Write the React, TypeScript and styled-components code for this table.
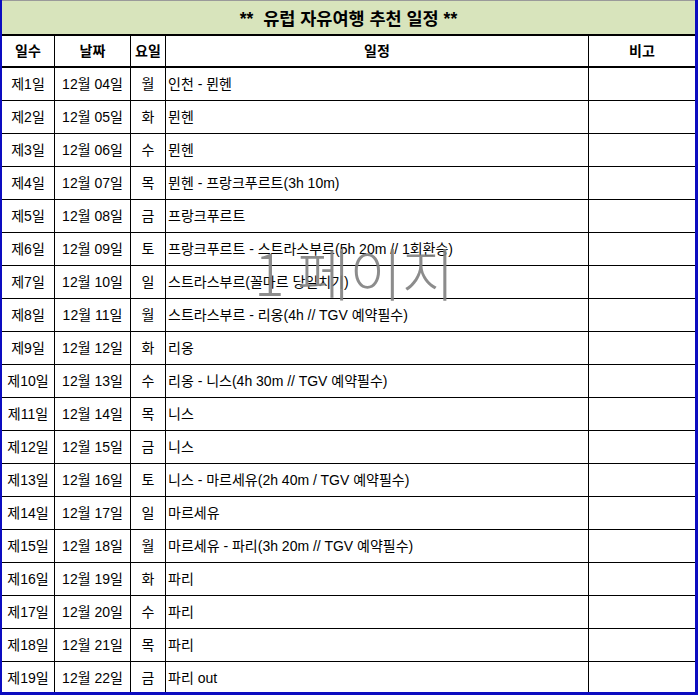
import styled, { createGlobalStyle } from "styled-components";

const GlobalStyle = createGlobalStyle`
  html, body {
    margin: 0;
    padding: 0;
    background: #ffffff;
  }
  body {
    font-family: "Liberation Sans", "Noto Sans CJK KR", sans-serif;
    color: #000000;
  }
`;

const Sheet = styled.div`
  position: relative;
  width: 698px;
  height: 695px;
  box-sizing: border-box;
  border-left: 2px solid #0c0cc0;
  border-right: 3px solid #0c0cc0;
  border-bottom: 3px solid #0c0cc0;
  overflow: hidden;
  background: #ffffff;
`;

const Titlebar = styled.div`
  height: 33px;
  border-top: 1px solid #9a9a9a;
  border-bottom: 2px solid #000000;
  background: #d8e4bc;
  display: flex;
  justify-content: center;
  align-items: center;
  font-size: 17.5px;
  font-weight: bold;
  white-space: pre;
`;

const Row = styled.div<{ $head?: boolean }>`
  display: grid;
  grid-template-columns: 53px 76px 35px 423px 106px;
  height: ${(p) => (p.$head ? "30px" : "32px")};
  border-bottom: ${(p) => (p.$head ? "2px" : "1px")} solid #000000;
  font-size: 14px;
  font-weight: ${(p) => (p.$head ? "bold" : "normal")};
`;

const Cell = styled.div<{ $left?: boolean }>`
  display: flex;
  align-items: center;
  justify-content: ${(p) => (p.$left ? "flex-start" : "center")};
  padding-left: ${(p) => (p.$left ? "2px" : "0")};
  padding-bottom: 2px;
  border-right: 1px solid #000000;
  white-space: nowrap;
  overflow: hidden;
  &:last-child {
    border-right: none;
  }
`;

const Watermark = styled.div`
  position: absolute;
  left: 252px;
  top: 243px;
  font-family: "Noto Sans CJK KR", sans-serif;
  font-size: 57px;
  font-weight: 300;
  line-height: 1;
  color: rgba(128, 128, 128, 0.9);
  white-space: pre;
  pointer-events: none;
`;

const days = [
  ["12월 04일", "월", "인천 - 뮌헨"],
  ["12월 05일", "화", "뮌헨"],
  ["12월 06일", "수", "뮌헨"],
  ["12월 07일", "목", "뮌헨 - 프랑크푸르트(3h 10m)"],
  ["12월 08일", "금", "프랑크푸르트"],
  ["12월 09일", "토", "프랑크푸르트 - 스트라스부르(5h 20m // 1회환승)"],
  ["12월 10일", "일", "스트라스부르(꼴마르 당일치기)"],
  ["12월 11일", "월", "스트라스부르 - 리옹(4h // TGV 예약필수)"],
  ["12월 12일", "화", "리옹"],
  ["12월 13일", "수", "리옹 - 니스(4h 30m // TGV 예약필수)"],
  ["12월 14일", "목", "니스"],
  ["12월 15일", "금", "니스"],
  ["12월 16일", "토", "니스 - 마르세유(2h 40m / TGV 예약필수)"],
  ["12월 17일", "일", "마르세유"],
  ["12월 18일", "월", "마르세유 - 파리(3h 20m // TGV 예약필수)"],
  ["12월 19일", "화", "파리"],
  ["12월 20일", "수", "파리"],
  ["12월 21일", "목", "파리"],
  ["12월 22일", "금", "파리 out"],
];

export default function App() {
  return (
    <>
      <GlobalStyle />
      <Sheet>
        <Titlebar>{"**  유럽 자유여행 추천 일정 **"}</Titlebar>
        <Row $head>
          <Cell>일수</Cell>
          <Cell>날짜</Cell>
          <Cell>요일</Cell>
          <Cell>일정</Cell>
          <Cell>비고</Cell>
        </Row>
        {days.map((d, i) => (
          <Row key={i}>
            <Cell>제{i + 1}일</Cell>
            <Cell>{d[0]}</Cell>
            <Cell>{d[1]}</Cell>
            <Cell $left>{d[2]}</Cell>
            <Cell></Cell>
          </Row>
        ))}
        <Watermark>1 페이지</Watermark>
      </Sheet>
    </>
  );
}
